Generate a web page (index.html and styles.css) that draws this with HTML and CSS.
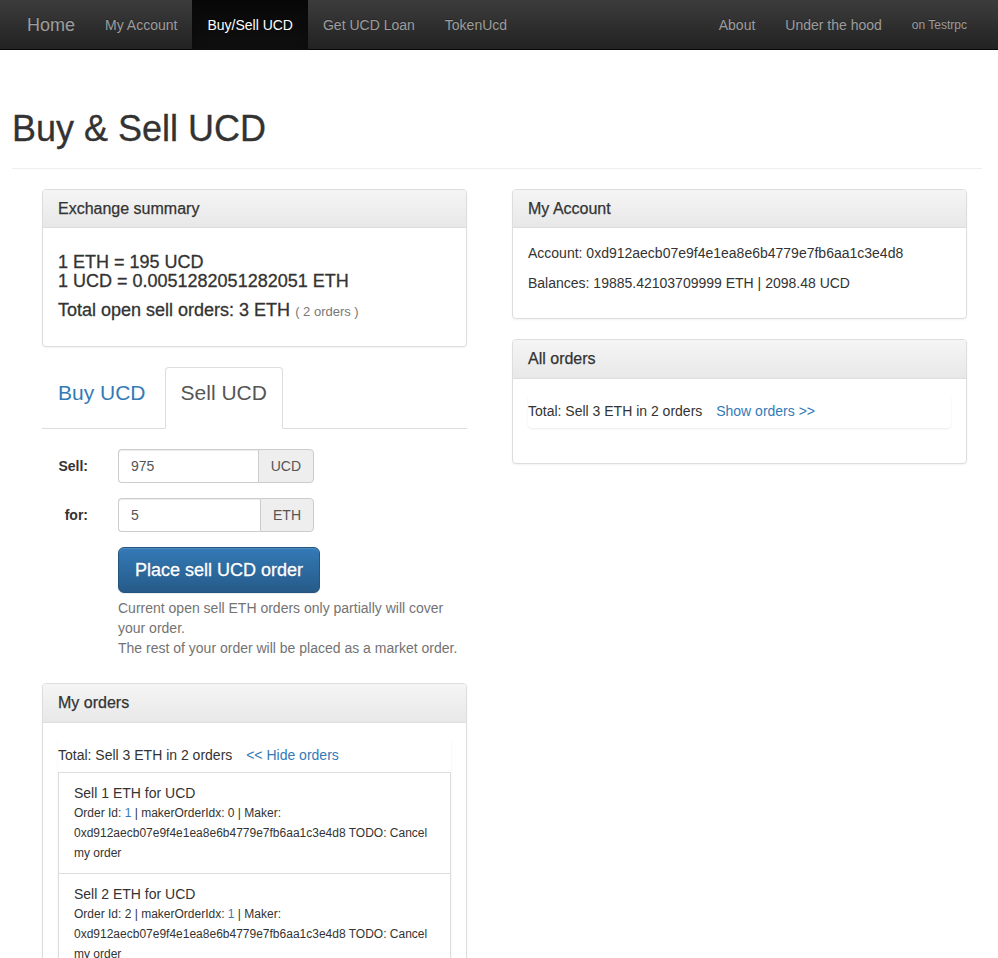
FILE: index.html
```html
<!DOCTYPE html>
<html lang="en">
<head>
<meta charset="utf-8">
<title>Buy &amp; Sell UCD</title>
<link rel="stylesheet" href="styles.css">
</head>
<body>
<nav class="navbar">
  <div class="nav-group">
    <a class="brand" href="#">Home</a>
    <ul class="nav">
      <li><a href="#">My Account</a></li>
      <li class="active"><a href="#">Buy/Sell UCD</a></li>
      <li><a href="#">Get UCD Loan</a></li>
      <li><a href="#">TokenUcd</a></li>
    </ul>
  </div>
  <ul class="nav">
    <li><a href="#">About</a></li>
    <li><a href="#">Under the hood</a></li>
    <li><a href="#" class="net">on Testrpc</a></li>
  </ul>
</nav>

<div class="container">
  <div class="page-header">
    <h1>Buy &amp; Sell UCD</h1>
  </div>

  <div class="columns">
    <div class="col-left">
      <div class="panel">
        <div class="panel-heading"><h3 class="panel-title">Exchange summary</h3></div>
        <div class="panel-body">
          <h4 class="rate">1 ETH = 195 UCD<br>1 UCD = 0.0051282051282051 ETH</h4>
          <h4 class="rate">Total open sell orders: 3 ETH <small>( 2 orders )</small></h4>
        </div>
      </div>

      <ul class="tabs">
        <li><a href="#">Buy UCD</a></li>
        <li class="active"><a href="#">Sell UCD</a></li>
      </ul>

      <form class="order-form">
        <div class="form-row">
          <label class="form-label">Sell:</label>
          <div class="input-group">
            <input class="form-control" type="text" value="975">
            <span class="addon">UCD</span>
          </div>
        </div>
        <div class="form-row">
          <label class="form-label">for:</label>
          <div class="input-group">
            <input class="form-control" type="text" value="5">
            <span class="addon">ETH</span>
          </div>
        </div>
        <div class="form-actions">
          <button type="button" class="btn-primary">Place sell UCD order</button>
          <p class="help-block">Current open sell ETH orders only partially will cover your order.<br>The rest of your order will be placed as a market order.</p>
        </div>
      </form>

      <div class="panel">
        <div class="panel-heading"><h3 class="panel-title">My orders</h3></div>
        <div class="panel-body">
          <div class="inner-panel">
            <div class="inner-heading">Total: Sell 3 ETH in 2 orders <a href="#" class="toggle">&lt;&lt; Hide orders</a></div>
            <ul class="list-group">
              <li class="list-item">
                <div class="item-title">Sell 1 ETH for UCD</div>
                <div class="item-meta">Order Id: <span class="hl">1</span> | makerOrderIdx: 0 | Maker: 0xd912aecb07e9f4e1ea8e6b4779e7fb6aa1c3e4d8 TODO: Cancel my order</div>
              </li>
              <li class="list-item">
                <div class="item-title">Sell 2 ETH for UCD</div>
                <div class="item-meta">Order Id: 2 | makerOrderIdx: <span class="hl">1</span> | Maker: 0xd912aecb07e9f4e1ea8e6b4779e7fb6aa1c3e4d8 TODO: Cancel my order</div>
              </li>
            </ul>
          </div>
        </div>
      </div>
    </div>

    <div class="col-right">
      <div class="panel">
        <div class="panel-heading"><h3 class="panel-title">My Account</h3></div>
        <div class="panel-body">
          <p>Account: 0xd912aecb07e9f4e1ea8e6b4779e7fb6aa1c3e4d8</p>
          <p>Balances: 19885.42103709999 ETH | 2098.48 UCD</p>
        </div>
      </div>

      <div class="panel">
        <div class="panel-heading"><h3 class="panel-title">All orders</h3></div>
        <div class="panel-body">
          <div class="inner-panel last">
            <div class="inner-heading">Total: Sell 3 ETH in 2 orders <a href="#" class="toggle">Show orders &gt;&gt;</a></div>
          </div>
        </div>
      </div>
    </div>
  </div>
</div>
</body>
</html>
```

FILE: styles.css
```css
* { box-sizing: border-box; }

html, body {
  margin: 0;
  padding: 0;
  background: #fff;
}

body {
  font-family: "Liberation Sans", Arial, Helvetica, sans-serif;
  font-size: 14px;
  line-height: 20px;
  color: #333;
}

a { color: #337ab7; text-decoration: none; }

/* ---------- navbar ---------- */
.navbar {
  height: 50px;
  display: flex;
  justify-content: space-between;
  padding: 0 16px 0 12px;
  background: linear-gradient(to bottom, #3c3c3c 0%, #222 100%);
  border-bottom: 1px solid #080808;
}

.nav-group { display: flex; }

.brand {
  display: block;
  padding: 15px;
  font-size: 18px;
  line-height: 20px;
  color: #9d9d9d;
  text-shadow: 0 -1px 0 rgba(0,0,0,.25);
}

.nav {
  display: flex;
  list-style: none;
  margin: 0;
  padding: 0;
}

.nav a {
  display: block;
  padding: 15px;
  line-height: 20px;
  color: #9d9d9d;
  text-shadow: 0 -1px 0 rgba(0,0,0,.25);
}

.nav .active a {
  color: #fff;
  background: linear-gradient(to bottom, #080808 0%, #0f0f0f 100%);
  box-shadow: inset 0 3px 9px rgba(0,0,0,.25);
}

.nav a.net { font-size: 12px; }

/* ---------- page ---------- */
.container {
  padding: 19px 16px 0 12px;
}

.page-header {
  margin: 40px 0 20px;
  padding-bottom: 9px;
  border-bottom: 1px solid #eee;
}

.page-header h1 {
  margin: 20px 0 10px;
  font-size: 36px;
  line-height: 1.1;
  font-weight: 500;
  -webkit-text-stroke: 0.3px #333;
}

.columns {
  display: flex;
  align-items: flex-start;
  gap: 45px;
  padding-left: 30px;
}

.col-left { width: 425px; flex: none; }
.col-right { width: 455px; flex: none; }

/* ---------- panels ---------- */
.panel {
  background: #fff;
  border: 1px solid #ddd;
  border-radius: 4px;
  box-shadow: 0 1px 2px rgba(0,0,0,.05);
  margin-bottom: 20px;
}

.panel-heading {
  padding: 10px 15px;
  border-bottom: 1px solid #ddd;
  border-radius: 3px 3px 0 0;
  background: linear-gradient(to bottom, #f5f5f5 0%, #e8e8e8 100%);
}

.panel-title {
  margin: 0;
  font-size: 16px;
  line-height: 1.1;
  font-weight: 500;
  color: #333;
  -webkit-text-stroke: 0.25px #333;
}

.panel-body { padding: 15px; }

.panel-body p { margin: 0 0 10px; }

.rate {
  margin: 10px 0;
  font-size: 18px;
  line-height: 19px;
  font-weight: 500;
  -webkit-text-stroke: 0.3px #333;
}

.rate small {
  font-size: 13px;
  color: #777;
  font-weight: normal;
  -webkit-text-stroke: 0;
}

/* ---------- tabs ---------- */
.tabs {
  display: flex;
  list-style: none;
  margin: 0;
  padding: 0;
  border-bottom: 1px solid #ddd;
}

.tabs li {
  margin-bottom: -1px;
  margin-right: 3px;
}

.tabs a {
  display: block;
  padding: 10px 15px 20px;
  font-size: 21px;
  line-height: 30px;
  border: 1px solid transparent;
  border-radius: 4px 4px 0 0;
  color: #337ab7;
}

.tabs .active a {
  color: #555;
  background: #fff;
  border-color: #ddd #ddd transparent;
}

/* ---------- form ---------- */
.order-form {
  margin-top: 20px;
  margin-bottom: 25px;
}

.form-row {
  display: flex;
  align-items: center;
  margin-bottom: 15px;
}

.form-label {
  width: 61px;
  padding-right: 15px;
  text-align: right;
  font-weight: bold;
  margin-right: 15px;
}

.input-group {
  display: flex;
  width: 196px;
}

.form-control {
  flex: 1;
  min-width: 0;
  height: 34px;
  padding: 6px 12px;
  font-family: inherit;
  font-size: 14px;
  color: #555;
  border: 1px solid #ccc;
  border-right: 0;
  border-radius: 4px 0 0 4px;
  box-shadow: inset 0 1px 1px rgba(0,0,0,.075);
}

.addon {
  padding: 6px 12px;
  line-height: 20px;
  color: #555;
  background: #eee;
  border: 1px solid #ccc;
  border-radius: 0 4px 4px 0;
}

.form-actions {
  margin-left: 76px;
}

.btn-primary {
  display: inline-block;
  padding: 10px 16px;
  font-family: inherit;
  font-size: 18px;
  line-height: 24px;
  color: #fff;
  border: 1px solid #245580;
  border-radius: 6px;
  background: linear-gradient(to bottom, #337ab7 0%, #265a88 100%);
  box-shadow: inset 0 1px 0 rgba(255,255,255,.15), 0 1px 1px rgba(0,0,0,.075);
  text-shadow: 0 -1px 0 rgba(0,0,0,.2);
  -webkit-text-stroke: 0.3px #fff;
  cursor: pointer;
}

.help-block {
  margin: 5px 0 0;
  color: #737373;
}

/* ---------- inner panel & list ---------- */
.inner-panel {
  border-radius: 4px;
  box-shadow: 0 1px 2px rgba(0,0,0,.08);
  margin-bottom: 20px;
}

.inner-heading {
  padding: 7px 0;
  line-height: 20px;
}

.toggle { margin-left: 10px; }

.list-group {
  list-style: none;
  margin: 0;
  padding: 0;
}

.list-item {
  padding: 10px 15px;
  border: 1px solid #ddd;
  margin-bottom: -1px;
}

.item-title {
  font-size: 14px;
  line-height: 20px;
}

.item-meta {
  font-size: 12px;
  line-height: 20px;
}

.hl { color: #337ab7; }
```
